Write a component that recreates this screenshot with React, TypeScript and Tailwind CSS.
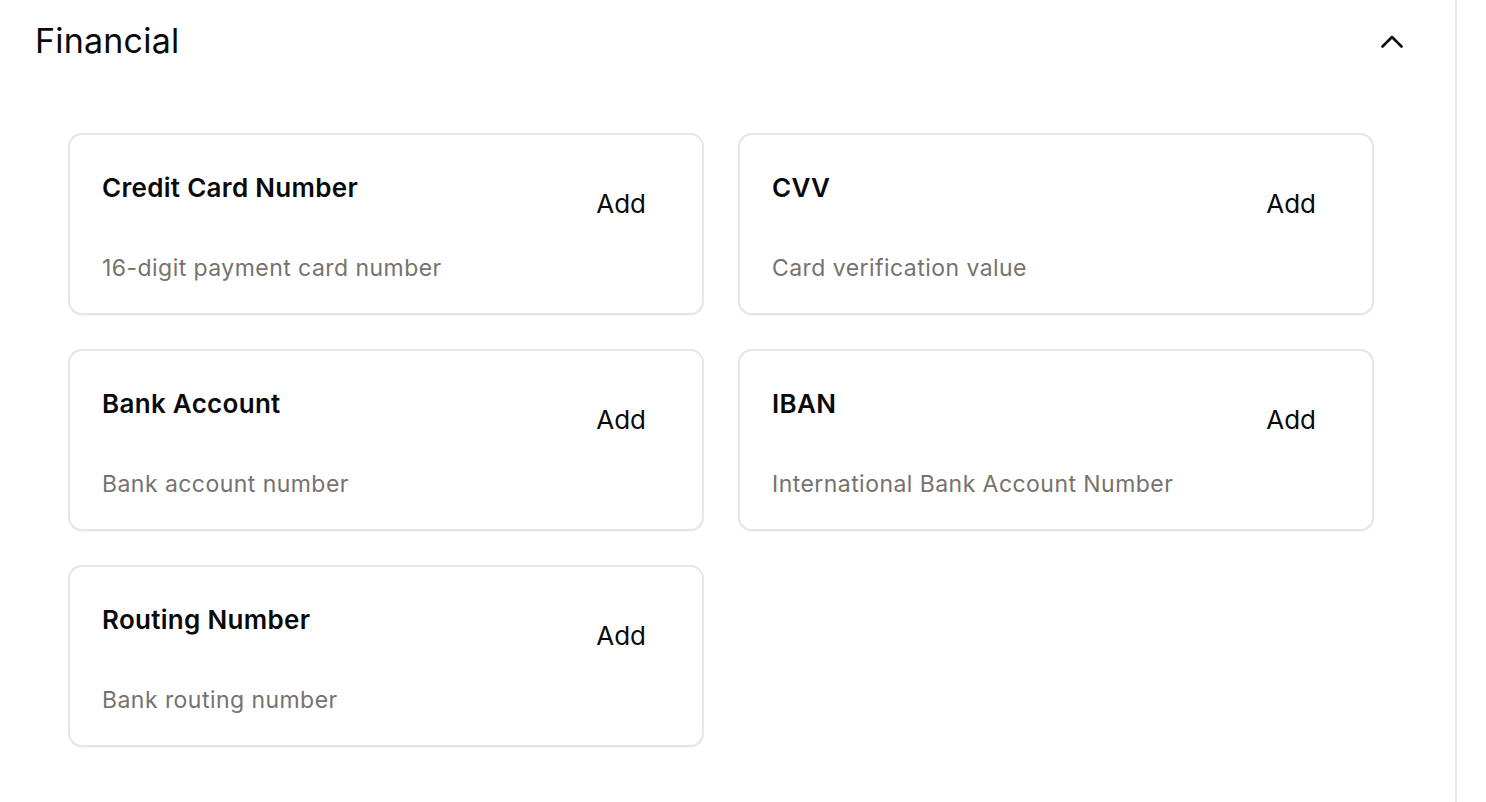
import React from "react";

interface Field {
  title: string;
  description: string;
}

const fields: Field[] = [
  { title: "Credit Card Number", description: "16-digit payment card number" },
  { title: "CVV", description: "Card verification value" },
  { title: "Bank Account", description: "Bank account number" },
  { title: "IBAN", description: "International Bank Account Number" },
  { title: "Routing Number", description: "Bank routing number" },
];

function FieldCard({ title, description }: Field) {
  return (
    <div className="h-[182px] rounded-[14px] border-2 border-[#e6e6e6] bg-white px-[32px] pt-[37px] shadow-[0_1px_2px_rgba(0,0,0,0.04)]">
      <div className="flex items-start justify-between">
        <h3 className="text-[26px] leading-[32px] font-semibold tracking-[0.3px] text-[#0a0a0a]">{title}</h3>
        <button className="px-6 py-4 text-[26px] leading-[32px] font-normal text-[#0a0a0a] cursor-pointer">
          Add
        </button>
      </div>
      <p className="mt-[18px] text-[23px] leading-[28px] tracking-[0.45px] text-[#77726e]">{description}</p>
    </div>
  );
}

export default function App() {
  return (
    <div className="flex h-screen w-full bg-white font-['Inter',sans-serif] antialiased">
      <main className="w-[1457px] shrink-0 border-r-2 border-[#e8e8e8]">
        {/* Section header */}
        <div className="flex items-center justify-between pl-[35px] pr-[52px] pt-[18px]">
          <h2 className="text-[34px] leading-[46px] font-normal tracking-[0.2px] text-[#0a0a0a]">Financial</h2>
          <button className="cursor-pointer text-[#0a0a0a]">
            <svg width="22" height="13" viewBox="0 0 22 13" fill="none">
              <polyline
                points="1.5,11.5 11,2 20.5,11.5"
                stroke="currentColor"
                strokeWidth="2.6"
                strokeLinecap="round"
                strokeLinejoin="round"
              />
            </svg>
          </button>
        </div>

        {/* Field cards */}
        <div className="mt-[69px] ml-[68px] grid w-[1306px] grid-cols-2 gap-[34px]">
          {fields.map((f) => (
            <FieldCard key={f.title} {...f} />
          ))}
        </div>
      </main>
      <div className="flex-1" />
    </div>
  );
}
